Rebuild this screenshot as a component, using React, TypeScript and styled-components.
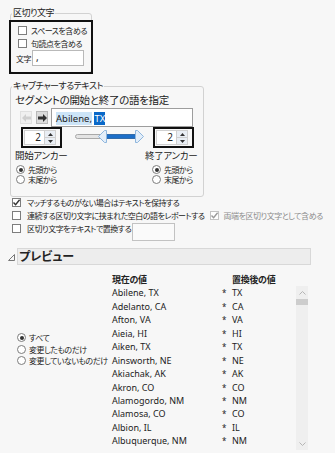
import styled, { createGlobalStyle } from "styled-components";

const GlobalStyle = createGlobalStyle`
  html, body {
    margin: 0;
    padding: 0;
    background: #f7f7f7;
  }
  body {
    font-family: "Noto Sans", "Noto Sans CJK JP", sans-serif;
    font-size: 8px;
    letter-spacing: -0.5px;
    color: #222;
    font-feature-settings: "palt";
    white-space: nowrap;
  }
`;

const rows: [string, string][] = [
  ["Abilene, TX", "TX"],
  ["Adelanto, CA", "CA"],
  ["Afton, VA", "VA"],
  ["Aieia, HI", "HI"],
  ["Aiken, TX", "TX"],
  ["Ainsworth, NE", "NE"],
  ["Akiachak, AK", "AK"],
  ["Akron, CO", "CO"],
  ["Alamogordo, NM", "NM"],
  ["Alamosa, CO", "CO"],
  ["Albion, IL", "IL"],
  ["Albuquerque, NM", "NM"],
];

const CheckBox = ({ checked, disabled }: { checked?: boolean; disabled?: boolean }) => (
  <CheckBoxBox disabled={disabled}>
    {checked && (
      <svg width="9" height="9" viewBox="0 0 9 9">
        <path
          d="M1.5 4.6 L3.6 6.8 L7.6 1.8"
          fill="none"
          stroke={disabled ? "#9a9a9a" : "#333"}
          strokeWidth="1.4"
        />
      </svg>
    )}
  </CheckBoxBox>
);

const Radio = ({ checked }: { checked?: boolean }) => (
  <RadioCircle>{checked && <RadioDot />}</RadioCircle>
);

const Spinner = () => (
  <SpinHighlight>
    <SpinControl>
      <SpinInput>2</SpinInput>
      <SpinButtons>
        <SpinButton>
          <svg width="5" height="3" viewBox="0 0 5 3">
            <path d="M0 3 L2.5 0 L5 3 Z" fill="#333" />
          </svg>
        </SpinButton>
        <SpinButton>
          <svg width="5" height="3" viewBox="0 0 5 3">
            <path d="M0 0 L2.5 3 L5 0 Z" fill="#333" />
          </svg>
        </SpinButton>
      </SpinButtons>
    </SpinControl>
  </SpinHighlight>
);

const App = () => {
  return (
    <>
      <GlobalStyle />
      <Page>
        <GroupBox width={82} gap={7}>
          <Legend>区切り文字</Legend>
          <Highlight>
            <OptionRow>
              <CheckBox />
              <span>スペースを含める</span>
            </OptionRow>
            <OptionRow>
              <CheckBox />
              <span>句読点を含める</span>
            </OptionRow>
            <CharRow>
              <span>文字</span>
              <CharInput>,</CharInput>
            </CharRow>
          </Highlight>
        </GroupBox>

        <GroupBox width={194} gap={3}>
          <Legend>キャプチャーするテキスト</Legend>
          <CaptureBody>
            <SegmentLabel>セグメントの開始と終了の語を指定</SegmentLabel>
            <SegmentRow>
              <ArrowButton disabled>
                <svg width="9" height="8" viewBox="0 0 9 8">
                  <path d="M0 4 L4 0 L4 2.5 L9 2.5 L9 5.5 L4 5.5 L4 8 Z" fill="#cfcfcf" />
                </svg>
              </ArrowButton>
              <ArrowButton>
                <svg width="9" height="8" viewBox="0 0 9 8">
                  <path d="M9 4 L5 0 L5 2.5 L0 2.5 L0 5.5 L5 5.5 L5 8 Z" fill="#333" />
                </svg>
              </ArrowButton>
              <SegmentField>
                <SelLight>Abilene,</SelLight>
                <span> </span>
                <SelDark>TX</SelDark>
              </SegmentField>
            </SegmentRow>
            <AnchorRow>
              <AnchorColumn width={60}>
                <SpinWrap offset={6}>
                  <Spinner />
                </SpinWrap>
                <AnchorLabel>開始アンカー</AnchorLabel>
                <AnchorRadios offset={1}>
                  <RadioRow>
                    <Radio checked />
                    <span>先頭から</span>
                  </RadioRow>
                  <RadioRow>
                    <Radio />
                    <span>末尾から</span>
                  </RadioRow>
                </AnchorRadios>
              </AnchorColumn>
              <SliderWrap>
                <svg width="70" height="14" viewBox="0 0 70 14">
                  <rect x="0.5" y="4.5" width="66" height="4" rx="2" fill="#e4e4e4" stroke="#a9a9a9" />
                  <rect x="30" y="4.5" width="31" height="4" fill="#1c6ec8" stroke="#15599f" strokeWidth="0.6" />
                  <path d="M23.5 6.5 L29.5 0.5 L31.5 0.5 L31.5 12.5 L29.5 12.5 Z" fill="#e3eef9" stroke="#8fb6dd" />
                  <path d="M68.5 6.5 L62.5 0.5 L60.5 0.5 L60.5 12.5 L62.5 12.5 Z" fill="#e3eef9" stroke="#8fb6dd" />
                </svg>
              </SliderWrap>
              <AnchorColumn>
                <SpinWrap offset={8}>
                  <Spinner />
                </SpinWrap>
                <AnchorLabel>終了アンカー</AnchorLabel>
                <AnchorRadios offset={7}>
                  <RadioRow>
                    <Radio checked />
                    <span>先頭から</span>
                  </RadioRow>
                  <RadioRow>
                    <Radio />
                    <span>末尾から</span>
                  </RadioRow>
                </AnchorRadios>
              </AnchorColumn>
            </AnchorRow>
          </CaptureBody>
        </GroupBox>

        <Options>
          <OptionLine>
            <CheckBox checked />
            <span>マッチするものがない場合はテキストを保持する</span>
          </OptionLine>
          <OptionLine>
            <CheckBox />
            <span>連続する区切り文字に挟まれた空白の語をレポートする</span>
            <SubOption>
              <CheckBox checked disabled />
              <Disabled>両端を区切り文字として含める</Disabled>
            </SubOption>
          </OptionLine>
          <OptionLine>
            <CheckBox />
            <span>区切り文字をテキストで置換する</span>
            <ReplaceInput />
          </OptionLine>
        </Options>

        <PreviewHeader>
          <svg width="7" height="7" viewBox="0 0 7 7">
            <path d="M0.5 6.5 L6.5 6.5 L6.5 0.5 Z" fill="none" stroke="#777" />
          </svg>
          <PreviewTitle>プレビュー</PreviewTitle>
        </PreviewHeader>

        <PreviewBody>
          <FilterRadios>
            <RadioRow>
              <Radio checked />
              <span>すべて</span>
            </RadioRow>
            <RadioRow>
              <Radio />
              <span>変更したものだけ</span>
            </RadioRow>
            <RadioRow>
              <Radio />
              <span>変更していないものだけ</span>
            </RadioRow>
          </FilterRadios>
          <Table>
            <TableRow>
              <HeadCell>現在の値</HeadCell>
              <span />
              <HeadCell>置換後の値</HeadCell>
            </TableRow>
            <TableBody>
              <div>
                {rows.map(([name, value]) => (
                  <TableRow key={name}>
                    <span>{name}</span>
                    <Star>*</Star>
                    <span>{value}</span>
                  </TableRow>
                ))}
              </div>
              <ScrollBar>
                <svg width="7" height="4" viewBox="0 0 7 4">
                  <path d="M0.5 3.5 L3.5 0.5 L6.5 3.5" fill="none" stroke="#b5b5b5" />
                </svg>
                <ScrollThumb />
                <ScrollSpacer />
                <svg width="7" height="4" viewBox="0 0 7 4">
                  <path d="M0.5 0.5 L3.5 3.5 L6.5 0.5" fill="none" stroke="#b5b5b5" />
                </svg>
              </ScrollBar>
            </TableBody>
          </Table>
        </PreviewBody>
      </Page>
    </>
  );
};

export default App;

const Page = styled.div`
  padding: 7px 0 0 10px;
  width: 325px;
  height: 446px;
`;

const GroupBox = styled.fieldset<{ width: number; gap: number }>`
  width: ${({ width }) => width}px;
  box-sizing: border-box;
  margin: 0 0 ${({ gap }) => gap}px 0;
  padding: 0;
  border: 1px solid #d2d2d2;
  border-radius: 3px;
`;

const Legend = styled.legend`
  margin-left: 1px;
  padding: 0 1px;
  font-size: 9px;
  line-height: 12px;
  color: #222;
`;

const Highlight = styled.div`
  margin: 1px -2px -2px -2px;
  padding: 2px 0 6px 7px;
  border: 2px solid #111;
  display: flex;
  flex-direction: column;
`;

const OptionRow = styled.div`
  display: flex;
  align-items: center;
  gap: 4px;
  height: 13px;
`;

const CharRow = styled.div`
  display: flex;
  align-items: center;
  gap: 1px;
  margin-left: -2px;
`;

const CharInput = styled.div`
  width: 52px;
  height: 16px;
  box-sizing: border-box;
  border: 1px solid #b9b9b9;
  background: #fff;
  padding-left: 3px;
  line-height: 13px;
  font-size: 10px;
`;

const CheckBoxBox = styled.span<{ disabled?: boolean }>`
  width: 9px;
  height: 9px;
  flex: none;
  box-sizing: border-box;
  border: 1px solid ${({ disabled }) => (disabled ? "#c4c4c4" : "#7d7d7d")};
  background: #fff;
  display: flex;
  align-items: center;
  justify-content: center;
  svg {
    margin: -1px;
  }
`;

const RadioCircle = styled.span`
  width: 9px;
  height: 9px;
  flex: none;
  box-sizing: border-box;
  border: 1px solid #7d7d7d;
  border-radius: 50%;
  background: #fff;
  display: flex;
  align-items: center;
  justify-content: center;
`;

const RadioDot = styled.span`
  width: 4px;
  height: 4px;
  border-radius: 50%;
  background: #333;
`;

const CaptureBody = styled.div`
  padding: 2px 0 12px 4px;
`;

const SegmentLabel = styled.div`
  font-size: 10.5px;
  letter-spacing: -0.3px;
  line-height: 12px;
`;

const SegmentRow = styled.div`
  display: flex;
  align-items: center;
  margin-top: 2px;
  padding-left: 5px;
`;

const ArrowButton = styled.div<{ disabled?: boolean }>`
  width: 12px;
  height: 13px;
  box-sizing: border-box;
  border: 1px solid ${({ disabled }) => (disabled ? "#e0e0e0" : "#b9b9b9")};
  background: ${({ disabled }) => (disabled ? "#f0f0f0" : "#dcdcdc")};
  display: flex;
  align-items: center;
  justify-content: center;
  margin-right: ${({ disabled }) => (disabled ? 4 : 3)}px;
`;

const SegmentField = styled.div`
  flex: 1;
  margin-right: 10px;
  height: 19px;
  box-sizing: border-box;
  border: 1px solid #9d9d9d;
  background: #fff;
  padding: 1px 0 0 4px;
  display: flex;
  align-items: center;
  font-size: 9.5px;
  letter-spacing: 0;
  white-space: pre;
`;

const SelLight = styled.span`
  background: #cce4f7;
`;

const SelDark = styled.span`
  background: #0a68c8;
  color: #fff;
`;

const AnchorRow = styled.div`
  display: flex;
  align-items: flex-start;
`;

const AnchorColumn = styled.div<{ width?: number }>`
  display: flex;
  flex-direction: column;
  width: ${({ width }) => (width ? `${width}px` : "auto")};
`;

const SpinWrap = styled.div<{ offset: number }>`
  margin-left: ${({ offset }) => offset}px;
  margin-bottom: 1px;
`;

const SpinHighlight = styled.div`
  width: 41px;
  height: 21px;
  box-sizing: border-box;
  border: 2px solid #111;
  padding: 1px 4px 1px 1px;
  display: flex;
`;

const SpinControl = styled.div`
  flex: 1;
  display: flex;
  border: 1px solid #d0d0d0;
`;

const SpinInput = styled.div`
  flex: 1;
  background: #fff;
  text-align: right;
  padding-right: 3px;
  font-size: 10px;
  letter-spacing: 0;
  line-height: 13px;
`;

const SpinButtons = styled.div`
  width: 10px;
  display: flex;
  flex-direction: column;
  border-left: 1px solid #d0d0d0;
`;

const SpinButton = styled.div`
  flex: 1;
  background: #e9eef4;
  display: flex;
  align-items: center;
  justify-content: center;
  & + & {
    border-top: 1px solid #d0d0d0;
  }
`;

const AnchorLabel = styled.div`
  font-size: 9.5px;
  letter-spacing: -0.3px;
  line-height: 14px;
`;

const AnchorRadios = styled.div<{ offset: number }>`
  margin-left: ${({ offset }) => offset}px;
  margin-top: 2px;
  display: flex;
  flex-direction: column;
`;

const RadioRow = styled.div`
  display: flex;
  align-items: center;
  gap: 3px;
  height: 9.5px;
  line-height: 9px;
`;

const SliderWrap = styled.div`
  width: 70px;
  padding-top: 3px;
  svg {
    display: block;
  }
`;

const Options = styled.div`
  margin-top: -4px;
  margin-left: 2px;
  display: flex;
  flex-direction: column;
`;

const OptionLine = styled.div`
  display: flex;
  align-items: center;
  gap: 6px;
  height: 13px;
`;

const SubOption = styled.div`
  display: flex;
  align-items: center;
  gap: 5px;
  margin-left: -1px;
`;

const Disabled = styled.span`
  color: #8c8c8c;
`;

const ReplaceInput = styled.div`
  width: 43px;
  height: 18px;
  box-sizing: border-box;
  border: 1px solid #c2c2c2;
  background: #fafafa;
  margin-left: -5px;
  margin-top: 6px;
`;

const PreviewHeader = styled.div`
  display: flex;
  align-items: center;
  margin: 13px 0 0 -2px;
  gap: 2px;
  svg {
    margin-top: 1px;
  }
`;

const PreviewTitle = styled.div`
  width: 294px;
  height: 17px;
  box-sizing: border-box;
  border: 1px solid #d8d8d8;
  background: #ededed;
  font-size: 12px;
  letter-spacing: 0;
  font-weight: 700;
  line-height: 15px;
  padding-left: 1px;
`;

const PreviewBody = styled.div`
  display: flex;
  padding: 8px 0 0 7px;
`;

const FilterRadios = styled.div`
  width: 95px;
  margin-top: 60px;
  display: flex;
  flex-direction: column;
  gap: 2px;
`;

const Table = styled.div`
  display: flex;
  flex-direction: column;
`;

const TableRow = styled.div`
  display: grid;
  grid-template-columns: 110px 10px 64px;
  height: 13.45px;
  line-height: 13px;
  font-size: 9px;
  letter-spacing: 0;
`;

const HeadCell = styled.span`
  font-weight: 700;
  letter-spacing: -0.3px;
`;

const Star = styled.span`
  font-size: 8px;
`;

const TableBody = styled.div`
  display: flex;
`;

const ScrollBar = styled.div`
  width: 12px;
  height: 164px;
  background: #efefef;
  display: flex;
  flex-direction: column;
  align-items: center;
  padding: 5px 0 4px;
  box-sizing: border-box;
`;

const ScrollThumb = styled.div`
  width: 12px;
  height: 6px;
  margin-top: 4px;
  background: #cdcdcd;
`;

const ScrollSpacer = styled.div`
  flex: 1;
`;
